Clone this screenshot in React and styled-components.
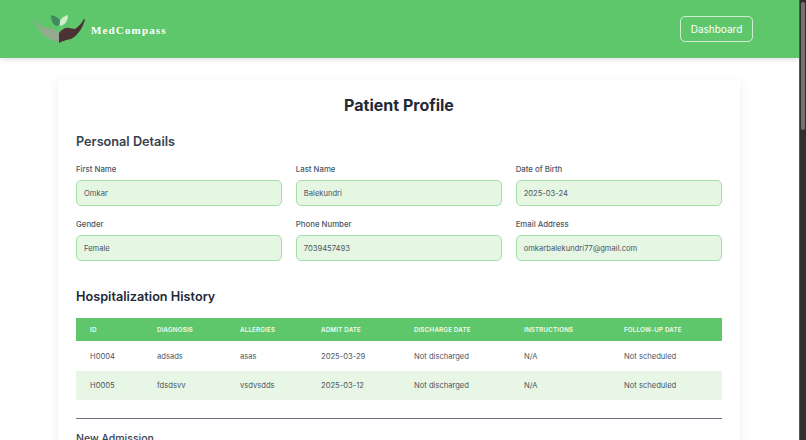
import React from "react";
import styled, { createGlobalStyle } from "styled-components";

const GlobalStyle = createGlobalStyle`
  html, body {
    margin: 0;
    height: 100%;
    overflow: hidden;
    background: #fff;
    font-family: "Inter", "Liberation Sans", sans-serif;
    color: #374151;
  }
  * { box-sizing: border-box; }
`;

const Shell = styled.div`
  display: flex;
  height: 440px;
  overflow: hidden;
`;

const Page = styled.div`
  flex: 1;
  min-width: 0;
`;

const Scrollbar = styled.div`
  width: 7px;
  padding: 2px 1px;
  background: #2f2f2f;
  border-left: 1px solid #555;
`;

const ScrollThumb = styled.div`
  height: 128px;
  border-radius: 3px;
  background: #727272;
`;

const Header = styled.header`
  display: flex;
  align-items: center;
  justify-content: space-between;
  height: 58px;
  padding: 0 46px 0 33px;
  background: #5fc76b;
  box-shadow: 0 2px 6px rgba(0, 0, 0, 0.12);
`;

const Brand = styled.div`
  display: flex;
  align-items: center;
  gap: 6px;
`;

const BrandName = styled.span`
  margin-top: 2px;
  font-family: "Liberation Serif", serif;
  font-size: 11px;
  font-weight: 700;
  letter-spacing: 1.15px;
  color: #fff;
`;

const DashboardButton = styled.button`
  width: 73px;
  height: 26px;
  padding: 0;
  border: 1px solid rgba(255, 255, 255, 0.7);
  border-radius: 5px;
  background: transparent;
  font-family: inherit;
  font-size: 10px;
  color: #fff;
`;

const Card = styled.main`
  width: 682px;
  margin: 22px 0 0 58px;
  padding: 14px 18px 0;
  background: #fff;
  box-shadow: 0 2px 10px rgba(0, 0, 0, 0.08);
`;

const Title = styled.h1`
  margin: 0 0 17px;
  text-align: center;
  font-size: 16px;
  line-height: 22px;
  font-weight: 700;
  color: #1f2937;
`;

const SectionTitle = styled.h2`
  margin: 0 0 ${(p) => p.$gap}px;
  font-size: 12.7px;
  line-height: 18px;
  font-weight: 600;
  color: ${(p) => p.$color};
`;

const SubTitle = styled.h3`
  margin: 0;
  font-size: 10.5px;
  line-height: 14px;
  font-weight: 500;
  color: #374151;
`;

const FieldGrid = styled.div`
  display: grid;
  grid-template-columns: repeat(3, 1fr);
  column-gap: 13.5px;
  row-gap: 13px;
  margin-bottom: 27px;
`;

const Field = styled.div`
  display: flex;
  flex-direction: column;
  gap: 5px;
`;

const Label = styled.label`
  font-size: 7.8px;
  line-height: 11px;
  font-weight: 500;
  color: #4b5563;
`;

const Input = styled.input`
  width: 100%;
  height: 26px;
  padding: 0 7px;
  border: 1px solid #a3dfa9;
  border-radius: 5px;
  background: #e5f6e2;
  font-family: inherit;
  font-size: 7.6px;
  color: #4b5563;
`;

const Table = styled.table`
  width: 100%;
  border-collapse: collapse;
  table-layout: fixed;
`;

const HeadCell = styled.th`
  height: 23px;
  padding: 0 0 0 14px;
  background: #5fc76b;
  text-align: left;
  font-size: 6.2px;
  font-weight: 600;
  letter-spacing: 0.2px;
  text-transform: uppercase;
  color: #f2fbf3;
`;

const Row = styled.tr`
  background: ${(p) => (p.$striped ? "#e8f6e5" : "#fff")};
`;

const Cell = styled.td`
  height: ${(p) => (p.$striped ? 29 : 30)}px;
  padding: 0 0 0 14px;
  font-size: 7.6px;
  color: #4b5563;
`;

const Divider = styled.hr`
  margin: 18px 0 13px;
  border: 0;
  border-top: 1px solid #6b7280;
`;

const fields = [
  ["First Name", "Omkar"],
  ["Last Name", "Balekundri"],
  ["Date of Birth", "2025-03-24"],
  ["Gender", "Female"],
  ["Phone Number", "7039457493"],
  ["Email Address", "omkarbalekundri77@gmail.com"],
];

const columns = [
  ["ID", 67],
  ["Diagnosis", 83],
  ["Allergies", 81],
  ["Admit Date", 93],
  ["Discharge Date", 110],
  ["Instructions", 100],
  ["Follow-up Date", 112],
];

const admissions = [
  ["H0004", "adsads", "asas", "2025-03-29", "Not discharged", "N/A", "Not scheduled"],
  ["H0005", "fdsdsvv", "vsdvsdds", "2025-03-12", "Not discharged", "N/A", "Not scheduled"],
];

function Logo() {
  return (
    <svg width="52" height="29" viewBox="0 0 52 29" aria-hidden="true">
      <path d="M0 4 C4 6 7 11 11 13 C17 13 23 14 26 18 L26 28 C21 25 16 24 13 22 C8 18 4 10 0 4 Z" fill="#95a991" />
      <path d="M26 18 C29 14 33 12 36 13 L42 14 C46 11 49 8 51 4 L52 4 C51 9 48 15 46 17 C43 21 40 23 38 24 C33 25 29 26 26 28 Z" fill="#4a3236" />
      <path d="M25 11 C20 11 18 6 18 0 C23 1 26 3 27 6 C27 8 26 10 25 11 Z" fill="#3f8a5e" />
      <path d="M27 11 C32 10 35 6 35 0 C31 1 28 3 27 6 Z" fill="#cdeccb" />
    </svg>
  );
}

export default function App() {
  return (
    <Shell>
      <GlobalStyle />
      <Page>
        <Header>
          <Brand>
            <Logo />
            <BrandName>MedCompass</BrandName>
          </Brand>
          <DashboardButton>Dashboard</DashboardButton>
        </Header>
        <Card>
          <Title>Patient Profile</Title>
          <SectionTitle $gap={13} $color="#374151">Personal Details</SectionTitle>
          <FieldGrid>
            {fields.map(([label, value]) => (
              <Field key={label}>
                <Label>{label}</Label>
                <Input readOnly value={value} />
              </Field>
            ))}
          </FieldGrid>
          <SectionTitle $gap={12} $color="#1f2937">Hospitalization History</SectionTitle>
          <Table>
            <colgroup>
              {columns.map(([name, width]) => (
                <col key={name} width={width} />
              ))}
            </colgroup>
            <thead>
              <tr>
                {columns.map(([name]) => (
                  <HeadCell key={name}>{name}</HeadCell>
                ))}
              </tr>
            </thead>
            <tbody>
              {admissions.map((row, i) => (
                <Row key={row[0]} $striped={i % 2 === 1}>
                  {row.map((value, j) => (
                    <Cell key={j} $striped={i % 2 === 1}>{value}</Cell>
                  ))}
                </Row>
              ))}
            </tbody>
          </Table>
          <Divider />
          <SubTitle>New Admission</SubTitle>
        </Card>
      </Page>
      <Scrollbar>
        <ScrollThumb />
      </Scrollbar>
    </Shell>
  );
}
